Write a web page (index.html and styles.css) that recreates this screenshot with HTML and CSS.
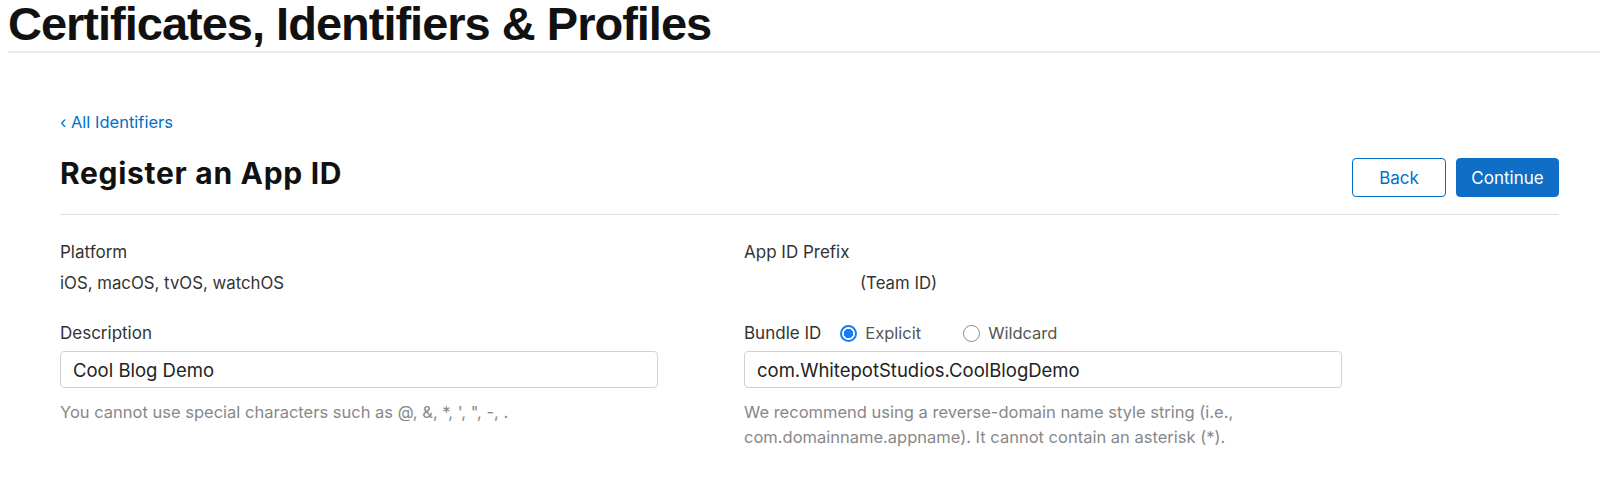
FILE: index.html
```html
<!DOCTYPE html>
<html lang="en">
<head>
    <meta charset="UTF-8">
    <title>Register an App ID</title>
    <link rel="stylesheet" href="styles.css">
</head>
<body>
    <header class="site-header">
        <h1 class="site-title">Certificates, Identifiers &amp; Profiles</h1>
    </header>

    <main class="page">
        <a class="back-link" href="#">&lsaquo; All Identifiers</a>

        <div class="page-head">
            <h2 class="page-title">Register an App ID</h2>
            <div class="actions">
                <button class="btn btn-outline">Back</button>
                <button class="btn btn-primary">Continue</button>
            </div>
        </div>

        <div class="form-grid">
            <div class="field">
                <div class="label">Platform</div>
                <div class="value">iOS, macOS, tvOS, watchOS</div>
            </div>
            <div class="field">
                <div class="label">App ID Prefix</div>
                <div class="value"><span class="prefix-value"></span>(Team ID)</div>
            </div>

            <div class="field">
                <div class="label">Description</div>
                <input class="text-input" type="text" value="Cool Blog Demo">
                <p class="hint">You cannot use special characters such as @, &amp;, *, ', ", -, .</p>
            </div>
            <div class="field">
                <div class="label label-row">
                    Bundle ID
                    <span class="radio-option"><span class="radio checked"></span>Explicit</span>
                    <span class="radio-option"><span class="radio"></span>Wildcard</span>
                </div>
                <input class="text-input" type="text" value="com.WhitepotStudios.CoolBlogDemo">
                <p class="hint">We recommend using a reverse-domain name style string (i.e.,<br>com.domainname.appname). It cannot contain an asterisk (*).</p>
            </div>
        </div>
    </main>
</body>
</html>
```

FILE: styles.css
```css
body {
    margin: 0;
    font-family: Inter, "Liberation Sans", Arial, sans-serif;
    color: #333;
    background: #fff;
}
.site-header {
    margin-left: 8px;
    padding-bottom: 3px;
    border-bottom: 2px solid #ebebeb;
}
.site-title {
    margin: 0;
    font-family: "Liberation Sans", Arial, sans-serif;
    font-size: 47px;
    line-height: 48px;
    font-weight: bold;
    color: #111;
    letter-spacing: -1px;
}
.page {
    padding: 0 41px 0 60px;
}
.back-link {
    display: block;
    margin-top: 59px;
    font-size: 16.5px;
    line-height: 20px;
    color: #0070c9;
    text-decoration: none;
}
.page-head {
    display: flex;
    justify-content: space-between;
    align-items: flex-start;
    margin-top: 24px;
    padding-bottom: 17px;
    border-bottom: 1px solid #e0e0e0;
}
.page-title {
    margin: 0;
    font-size: 30px;
    line-height: 34px;
    font-weight: bold;
    color: #111;
    letter-spacing: 0.7px;
}
.actions {
    display: flex;
    gap: 10px;
    margin-top: 2px;
}
.btn {
    height: 39px;
    border-radius: 4px;
    font-family: Inter, "Liberation Sans", Arial, sans-serif;
    font-size: 17px;
    cursor: pointer;
}
.btn-outline {
    width: 94px;
    background: #fff;
    border: 1px solid #0070c9;
    color: #0070c9;
}
.btn-primary {
    width: 103px;
    background: #0f6ec6;
    border: 1px solid #0f6ec6;
    color: #fff;
}
.form-grid {
    display: grid;
    grid-template-columns: 684px 1fr;
    row-gap: 30px;
    margin-top: 27px;
}
.label {
    font-size: 17px;
    line-height: 20px;
    color: #333;
}
.value {
    margin-top: 11px;
    font-size: 16.8px;
    line-height: 20px;
    color: #333;
}
.prefix-value {
    display: inline-block;
    width: 116px;
}
.label-row {
    display: flex;
    align-items: center;
}
.radio-option {
    display: flex;
    align-items: center;
    gap: 8px;
    margin-left: 19px;
    font-size: 16.5px;
    color: #555;
}
.radio-option + .radio-option {
    margin-left: 42px;
}
.radio {
    width: 15px;
    height: 15px;
    border: 1px solid #8a8a8a;
    border-radius: 50%;
    box-sizing: content-box;
    background: #fff;
}
.radio.checked {
    width: 13px;
    height: 13px;
    border: 2px solid #1a7cf5;
    background: radial-gradient(circle, #1a7cf5 0 4.5px, #fff 5px);
}
.text-input {
    display: block;
    box-sizing: border-box;
    width: 598px;
    height: 37px;
    margin-top: 8px;
    padding: 0 12px;
    border: 1px solid #d2d2d2;
    border-radius: 4px;
    font-family: Inter, "Liberation Sans", Arial, sans-serif;
    font-size: 18.5px;
    color: #222;
}
.hint {
    margin: 12px 0 0;
    font-size: 16.5px;
    line-height: 25px;
    color: #888;
}
```
